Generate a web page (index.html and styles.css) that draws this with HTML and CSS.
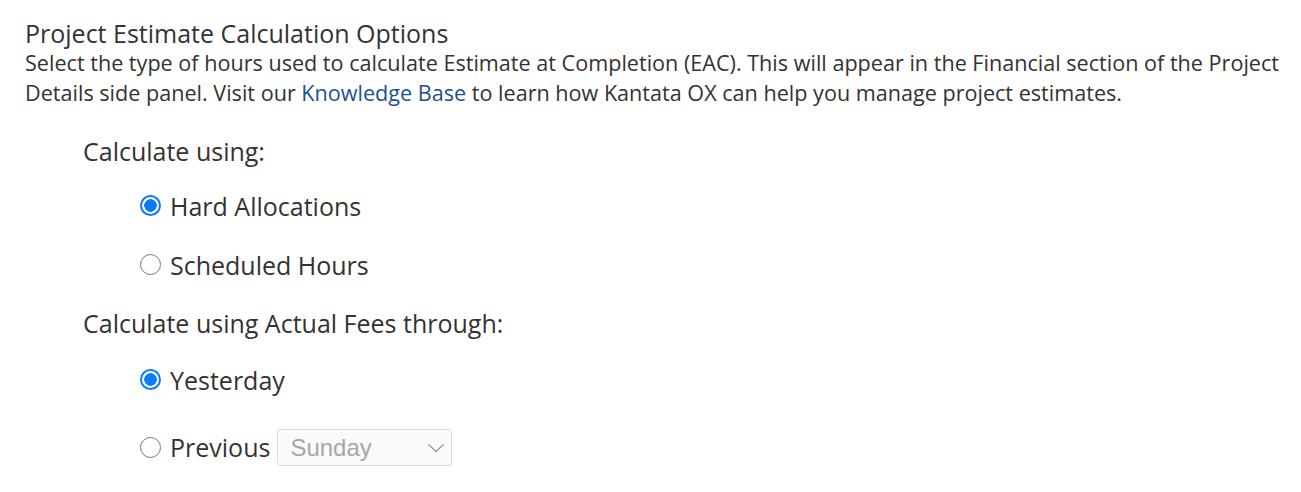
FILE: index.html
```html
<!DOCTYPE html>
<html lang="en">
<head>
    <meta charset="UTF-8">
    <title>Project Estimate Calculation Options</title>
    <link rel="stylesheet" href="styles.css">
</head>
<body>
    <div class="settings">
        <h2 class="title">Project Estimate Calculation Options</h2>
        <p class="desc">Select the type of hours used to calculate Estimate at Completion (EAC). This will appear in the Financial section of the Project Details side panel. Visit our <a href="#">Knowledge Base</a> to learn how Kantata OX can help you manage project estimates.</p>

        <div class="group">
            <div class="group-label">Calculate using:</div>
            <label class="option"><input type="radio" name="hours" checked> Hard Allocations</label>
            <label class="option"><input type="radio" name="hours"> Scheduled Hours</label>
        </div>

        <div class="group second">
            <div class="group-label">Calculate using Actual Fees through:</div>
            <label class="option"><input type="radio" name="fees" checked> Yesterday</label>
            <label class="option tall"><input type="radio" name="fees"> Previous
                <span class="select">
                    <select disabled>
                        <option>Sunday</option>
                    </select>
                    <svg class="chevron" width="18" height="10" viewBox="0 0 18 10"><path d="M1.5 1.5 L9 8.5 L16.5 1.5" fill="none" stroke="#9a9a9a" stroke-width="1.5"/></svg>
                </span>
            </label>
        </div>
    </div>
</body>
</html>
```

FILE: styles.css
```css
body {
    margin: 0;
    font-family: "Open Sans", Arial, sans-serif;
    color: #333;
    background: #fff;
}
.settings {
    padding: 18px 6px 0 25px;
}
.title {
    margin: 0;
    font-size: 25px;
    font-weight: 400;
    line-height: 30px;
}
.desc {
    margin: 0;
    font-size: 21.6px;
    line-height: 30px;
}
.desc a {
    color: #1d4f96;
    text-decoration: none;
}
.group {
    margin-left: 58px;
    margin-top: 28px;
}
.group.second {
    margin-top: 14px;
}
.group-label {
    font-size: 25px;
    line-height: 30px;
    margin-bottom: 10px;
}
.second .group-label {
    margin-bottom: 12px;
}
.option {
    display: flex;
    align-items: center;
    gap: 9px;
    margin-left: 57px;
    height: 59px;
    font-size: 25px;
}
.option.tall {
    height: 76px;
}
.option input {
    appearance: none;
    margin: 0;
    width: 21px;
    height: 21px;
    border: 1.5px solid #777;
    border-radius: 50%;
    background: #fff;
}
.option input:checked {
    border: 2px solid #0a7aff;
    background: radial-gradient(circle, #0a7aff 0 6px, #fff 6.5px);
}
.select {
    position: relative;
    display: inline-block;
    margin-left: -2px;
}
.select select {
    appearance: none;
    display: block;
    width: 175px;
    height: 37px;
    padding: 0 12px;
    border: 1px solid #dcdcdc;
    border-radius: 3px;
    background: #fafafa;
    color: #a6a6a6;
    font-family: "Liberation Sans", Arial, sans-serif;
    font-size: 24px;
    opacity: 1;
}
.chevron {
    position: absolute;
    right: 7px;
    top: 14px;
}
```
